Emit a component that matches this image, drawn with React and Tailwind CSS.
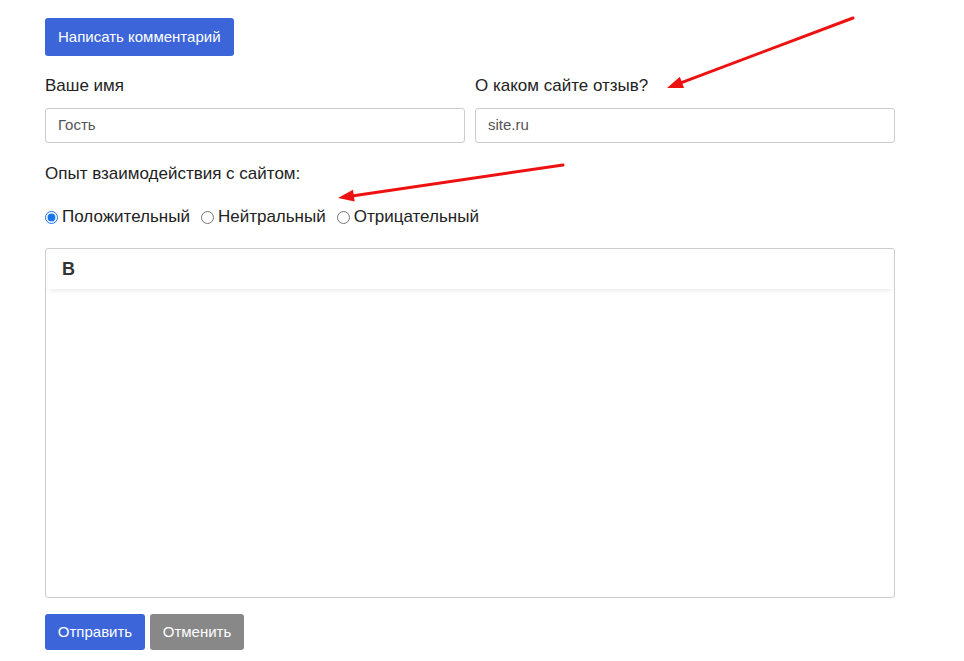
import React from "react";

function Arrow({ x1, y1, x2, y2 }) {
  const dx = x2 - x1, dy = y2 - y1;
  const len = Math.hypot(dx, dy);
  const ux = dx / len, uy = dy / len;
  const hl = 16, hw = 6;
  const bx = x2 - ux * hl, by = y2 - uy * hl;
  const px = -uy, py = ux;
  const pts = `${x2},${y2} ${bx + px * hw},${by + py * hw} ${bx - px * hw},${by - py * hw}`;
  return (
    <g>
      <line x1={x1} y1={y1} x2={bx + ux * 2} y2={by + uy * 2} stroke="#ee1111" strokeWidth="3" strokeLinecap="round" />
      <polygon points={pts} fill="#ee1111" />
    </g>
  );
}

export default function App() {
  return (
    <div className="relative w-[964px] h-[661px] bg-white overflow-hidden" style={{ fontFamily: '"Liberation Sans", Arial, sans-serif' }}>
      <div className="pl-[45px] pt-[18px] w-[895px] text-[#222]">
        <button className="h-[38px] px-[13px] bg-[#3b65d8] text-white text-[15px] rounded-[3px]">
          Написать комментарий
        </button>
        <div className="grid grid-cols-2 gap-[10px] mt-[19px]">
          <div>
            <div className="text-[17px] leading-[22px]">Ваше имя</div>
            <div className="mt-[11px] h-[35px] border border-[#ccc] rounded-[3px] flex items-center px-[12px] text-[15px] text-[#555]">Гость</div>
          </div>
          <div>
            <div className="text-[17px] leading-[22px]">О каком сайте отзыв?</div>
            <div className="mt-[11px] h-[35px] border border-[#ccc] rounded-[3px] flex items-center px-[12px] text-[15px] text-[#555]">site.ru</div>
          </div>
        </div>
        <div className="mt-[20px] text-[17px] leading-[22px]">Опыт взаимодействия с сайтом:</div>
        <div className="mt-[21px] flex items-center text-[17px] leading-[22px]">
          <label className="flex items-center">
            <input type="radio" name="exp" defaultChecked className="w-[13px] h-[13px] m-0 mr-[4px] accent-[#1a73e8]" />
            Положительный
          </label>
          <label className="flex items-center ml-[11px]">
            <input type="radio" name="exp" className="w-[13px] h-[13px] m-0 mr-[4px]" />
            Нейтральный
          </label>
          <label className="flex items-center ml-[11px]">
            <input type="radio" name="exp" className="w-[13px] h-[13px] m-0 mr-[4px]" />
            Отрицательный
          </label>
        </div>
        <div className="mt-[20px] h-[350px] border border-[#ccc] rounded-[3px] flex flex-col">
          <div className="h-[40px] flex items-center px-[14px] shadow-[0_3px_4px_-1px_rgba(0,0,0,0.08)] mx-[2px]">
            <span className="text-[18px] font-bold text-[#333]">B</span>
          </div>
          <div className="flex-1" />
        </div>
        <div className="mt-[16px] flex gap-[5px]">
          <button className="h-[36px] w-[100px] bg-[#3b65d8] text-white text-[15px] rounded-[3px]">Отправить</button>
          <button className="h-[36px] w-[94px] bg-[#888] text-white text-[15px] rounded-[3px]">Отменить</button>
        </div>
      </div>
      <svg className="absolute inset-0 pointer-events-none" width="964" height="661">
        <Arrow x1={853} y1={18} x2={667} y2={88} />
        <Arrow x1={563} y1={165} x2={338} y2={198} />
      </svg>
    </div>
  );
}
